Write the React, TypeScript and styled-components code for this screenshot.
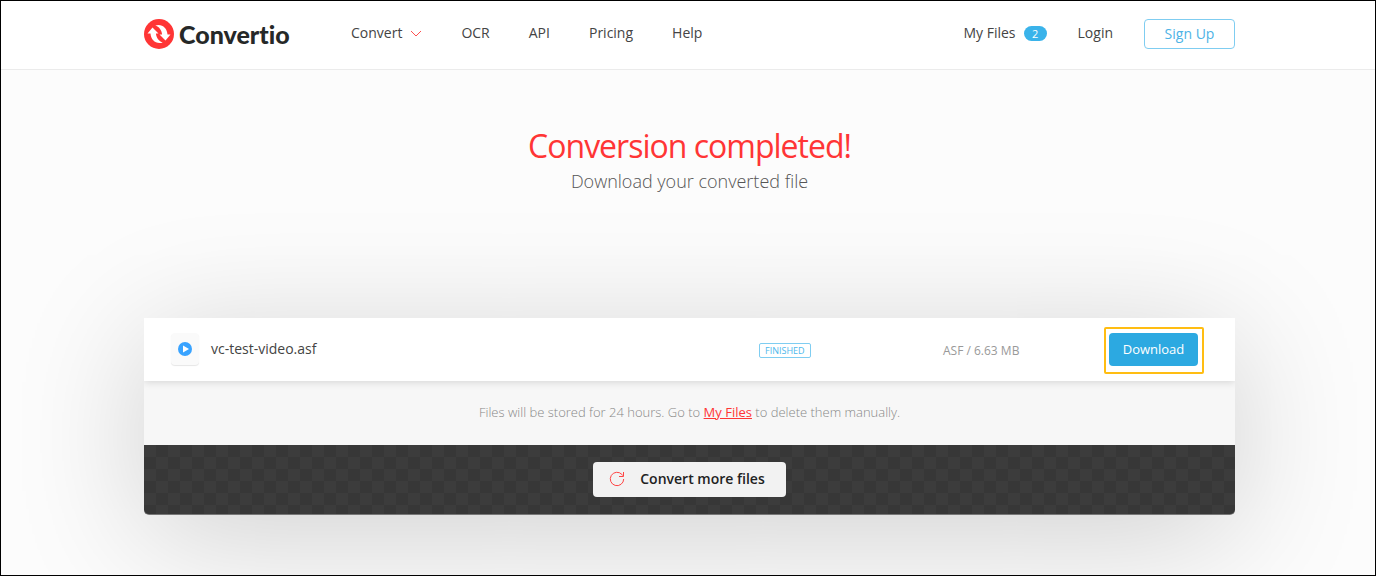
import React from "react";
import styled, { createGlobalStyle } from "styled-components";

const Global = createGlobalStyle`
  *, *::before, *::after { box-sizing: border-box; }
  body { margin: 0; background: #fcfcfc; font-family: "Open Sans", sans-serif; color: #444; }
  a { color: inherit; text-decoration: none; }
  button { font-family: inherit; cursor: pointer; }
`;
const Page = styled.div`
  min-height: 100vh;
  border: 1px solid #000;
  background: #fcfcfc;
  overflow: hidden;
  padding-bottom: 60px;
`;
const Header = styled.header`
  background: #fff;
  border-bottom: 1px solid #ebebeb;
`;
const Container = styled.div`
  width: 100%;
  max-width: 1124px;
  margin: 0 auto;
  padding: 0 15px 0 18px;
`;
const Bar = styled(Container)`
  display: flex;
  align-items: center;
  height: 68px;
  padding-bottom: 2px;
`;
const Logo = styled.a`
  display: flex;
  align-items: center;
  gap: 5px;
  width: 207px;
  font: 900 25px/32px Lato, sans-serif;
  font-variant-ligatures: none;
  color: #262828;
`;
const Nav = styled.nav`
  display: flex;
  align-items: center;
  gap: 39px;
  font-size: 14px;
  line-height: 20px;
`;
const NavLink = styled.a`
  display: flex;
  align-items: center;
  gap: 8px;
  padding-bottom: 2px;
`;
const Account = styled(Nav)`
  margin-left: auto;
  gap: 31px;
`;
const Badge = styled.span`
  width: 23px;
  border-radius: 8px;
  background: #3ab3ea;
  color: #fff;
  font-size: 11px;
  line-height: 15px;
  text-align: center;
`;
const SignUp = styled.button`
  width: 91px;
  height: 30px;
  padding: 0 0 2px;
  border: 1px solid #7fcdf1;
  border-radius: 4px;
  background: #fff;
  color: #4db3e6;
  font-size: 14px;
`;
const Intro = styled.section`
  padding-top: 53px;
  text-align: center;
`;
const Title = styled.h1`
  margin: 0;
  color: #ff3535;
  font-size: 32px;
  font-weight: 400;
  line-height: 46px;
  letter-spacing: -1px;
`;
const Subtitle = styled.p`
  margin: 0;
  color: #555;
  font-size: 18px;
  font-weight: 300;
  line-height: 24px;
`;
const Card = styled.main`
  margin-top: 125px;
  border-radius: 0 0 5px 5px;
  box-shadow: 0 20px 130px rgba(0, 0, 0, 0.18);
`;
const FileRow = styled.div`
  position: relative;
  display: grid;
  grid-template-columns: 1fr 184px 161px 100px;
  align-items: center;
  height: 63px;
  padding: 2px 31px 0 27px;
  background: #fff;
  box-shadow: 0 1px 8px rgba(0, 0, 0, 0.15);
  clip-path: inset(0 0 -12px 0);
`;
const FileName = styled.div`
  display: flex;
  align-items: center;
  gap: 12px;
  padding-bottom: 4px;
  font-size: 14px;
  line-height: 20px;
`;
const FileIcon = styled.span`
  display: grid;
  place-items: center;
  width: 28px;
  height: 32px;
  border-radius: 4px;
  background: #fafafa;
  box-shadow: 0 1px 1px rgba(0, 0, 0, 0.1);
`;
const Status = styled.span`
  justify-self: start;
  padding: 0 5px;
  border: 1px solid #7fcdf1;
  border-radius: 2px;
  color: #4db8ec;
  font-size: 9px;
  line-height: 13px;
`;
const FileSize = styled.span`
  color: #999;
  font-size: 12px;
  line-height: 18px;
`;
const Highlight = styled.div`
  padding: 4px 4px 6px 3px;
  border: 2px solid #ffbd12;
  border-radius: 2px;
`;
const Download = styled.button`
  display: block;
  width: 100%;
  height: 33px;
  padding: 0 0 2px;
  border: 0;
  border-radius: 4px;
  background: #2ca9e1;
  color: #fff;
  font-size: 13px;
`;
const Notice = styled.p`
  margin: 0;
  background: #f7f7f7;
  color: #888;
  font-size: 13px;
  font-weight: 300;
  line-height: 62px;
  height: 64px;
  text-align: center;
`;
const RedLink = styled.a`
  && { color: #ff3535; text-decoration: underline; }
  font-weight: 400;
`;
const Footer = styled.div`
  display: flex;
  justify-content: center;
  padding: 17px 0;
  border-bottom: 1px solid #777;
  border-radius: 0 0 5px 5px;
  background: repeating-conic-gradient(#373737 0 25%, #3c3c3c 0 50%) 0 0 / 24px 24px;
`;
const More = styled.button`
  display: flex;
  align-items: center;
  gap: 15px;
  height: 35px;
  padding: 0 21px 2px 16px;
  border: 0;
  border-radius: 4px;
  background: #f2f2f2;
  color: #222;
  font-size: 14px;
  font-weight: 600;
`;

export default function App() {
  return (
    <Page>
      <Global />
      <Header>
        <Bar>
          <Logo href="#">
            <svg width="30" height="30" viewBox="0 0 30 30" aria-hidden="true">
              <circle cx="15" cy="15" r="15" fill="#ff3535" />
              <path fill="#fff" d="M8.500 8.500l-5 6h3c.3 5.500 4 9.500 9 9.500 1.300 0 2.400-.2 3.200-.6-3.600-1-6.400-4.500-6.800-8.900h2.600zM21.500 21.500l5-6h-3c-.3-5.500-4-9.500-9-9.500-1.300 0-2.400.2-3.200.6 3.600 1 6.400 4.500 6.800 8.900h-2.600z" />
            </svg>
            Convertio
          </Logo>
          <Nav aria-label="Main">
            <NavLink href="#">
              Convert
              <svg width="12" height="8" viewBox="0 0 12 8" fill="none" stroke="#ff5050" aria-hidden="true">
                <path d="M1 2l5 5 5-5" />
              </svg>
            </NavLink>
            <NavLink href="#">OCR</NavLink>
            <NavLink href="#">API</NavLink>
            <NavLink href="#">Pricing</NavLink>
            <NavLink href="#">Help</NavLink>
          </Nav>
          <Account aria-label="Account">
            <NavLink href="#">My Files <Badge>2</Badge></NavLink>
            <NavLink href="#">Login</NavLink>
            <SignUp type="button">Sign Up</SignUp>
          </Account>
        </Bar>
      </Header>
      <Container>
        <Intro>
          <Title>Conversion completed!</Title>
          <Subtitle>Download your converted file</Subtitle>
        </Intro>
        <Card>
          <FileRow>
            <FileName>
              <FileIcon>
                <svg width="14" height="14" viewBox="0 0 14 14" aria-hidden="true">
                  <circle cx="7" cy="7" r="7" fill="#39a3ff" />
                  <path d="M5 3.500v7L11 7z" fill="#fff" />
                </svg>
              </FileIcon>
              vc-test-video.asf
            </FileName>
            <Status>FINISHED</Status>
            <FileSize>ASF / 6.63 MB</FileSize>
            <Highlight>
              <Download type="button">Download</Download>
            </Highlight>
          </FileRow>
          <Notice>
            Files will be stored for 24 hours. Go to <RedLink href="#">My Files</RedLink> to delete them manually.
          </Notice>
          <Footer>
            <More type="button">
              <svg width="16" height="16" viewBox="0 0 16 16" fill="none" stroke="#ff4545" aria-hidden="true">
                <path d="M14.700 8A6.700 6.700 0 1 1 12.900 3.400L14.500 5M14.500 1v4.500H10" />
              </svg>
              Convert more files
            </More>
          </Footer>
        </Card>
      </Container>
    </Page>
  );
}
